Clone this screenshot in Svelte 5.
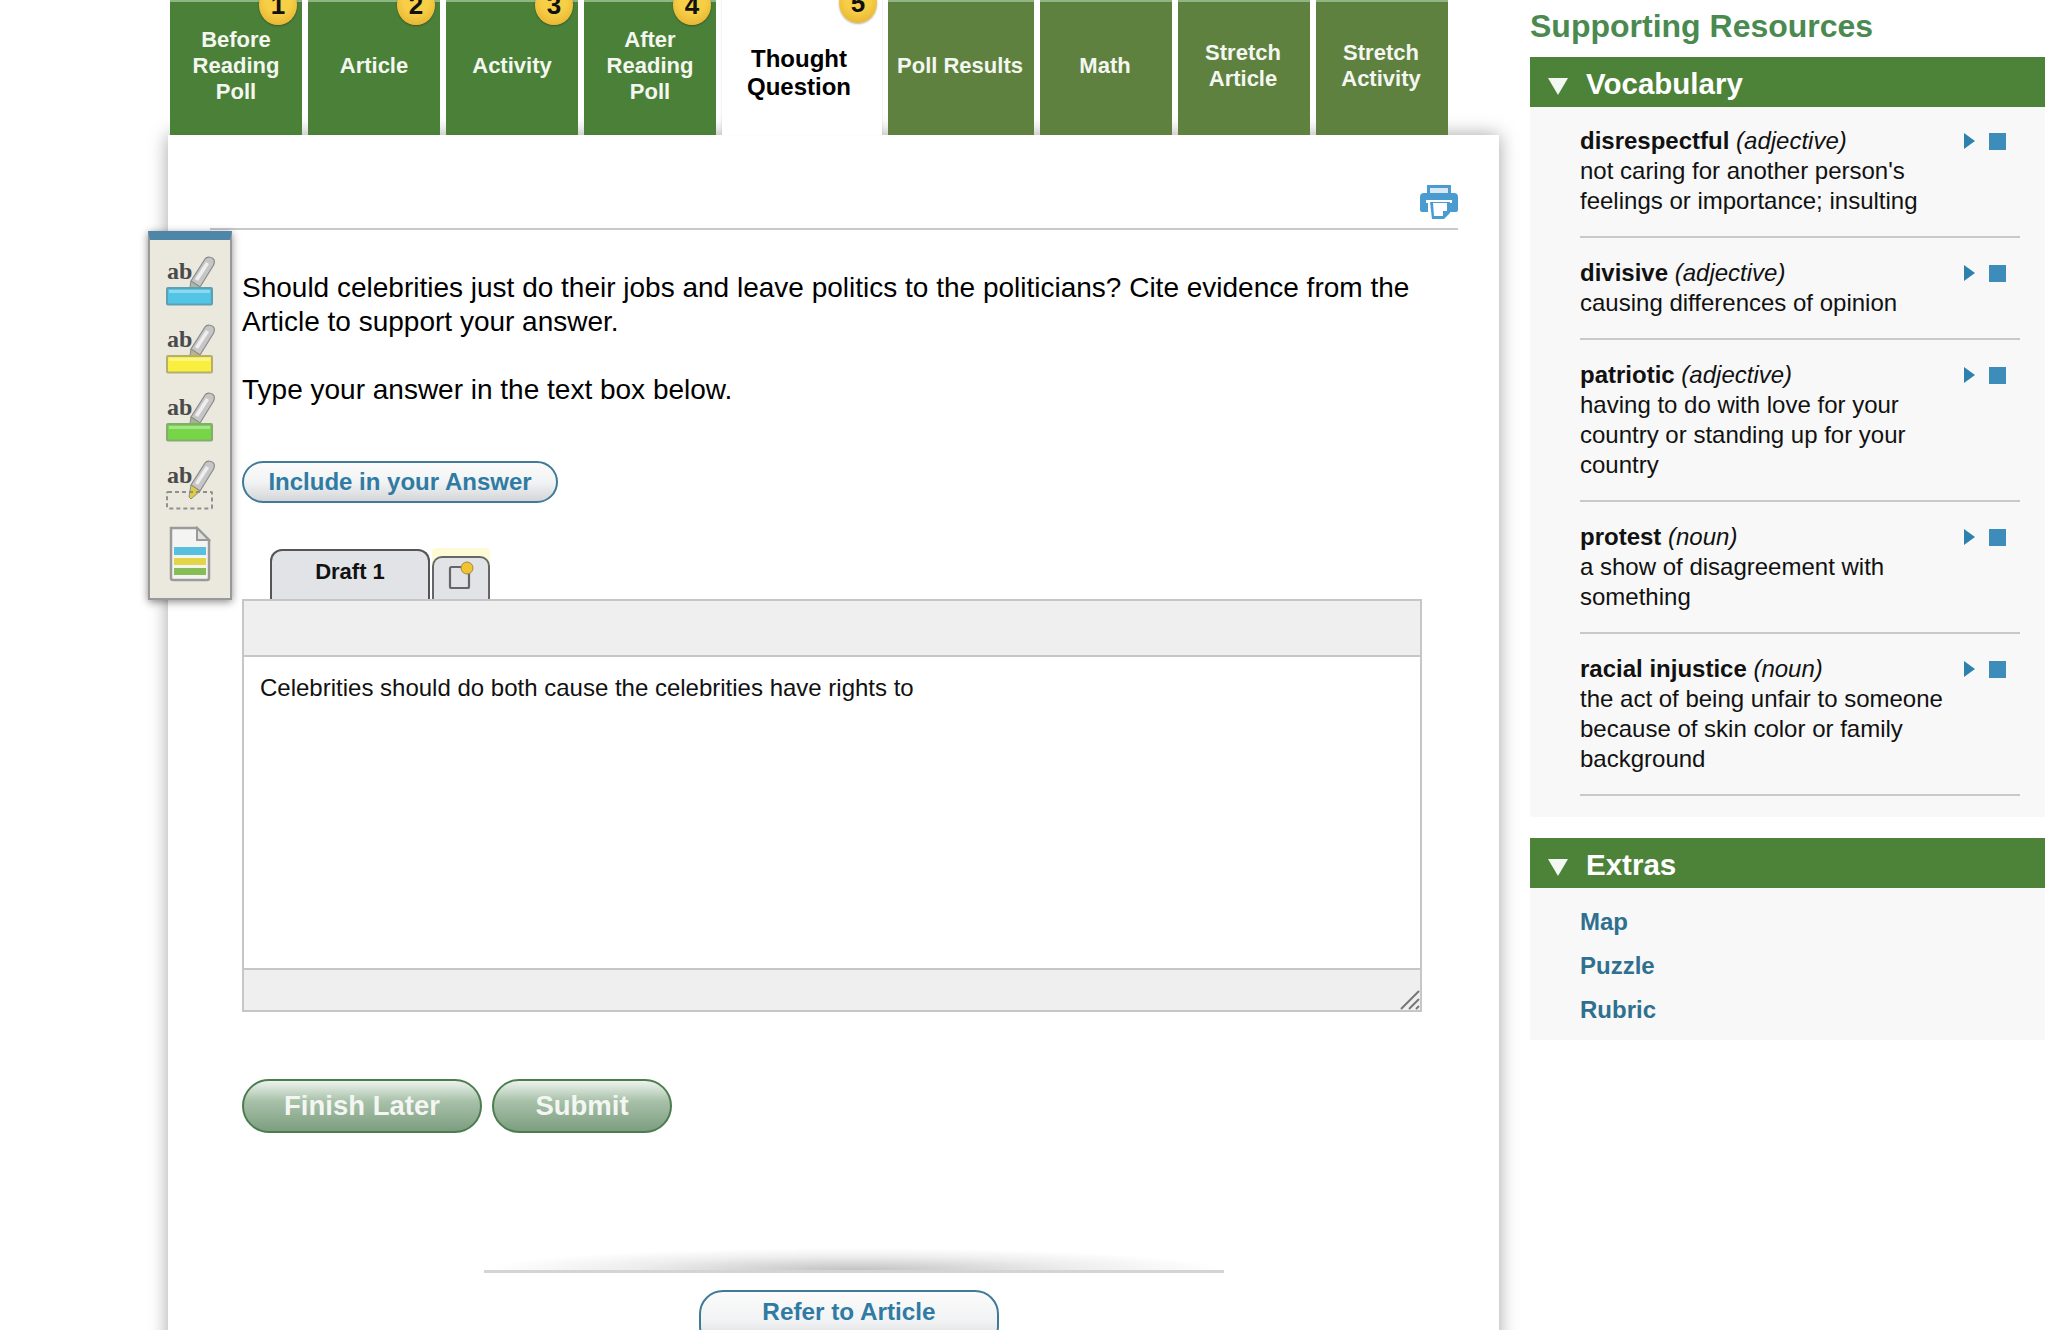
<script>
  const tabs = [
    { label: 'Before Reading Poll', badge: 1, w: 132 },
    { label: 'Article', badge: 2, w: 132 },
    { label: 'Activity', badge: 3, w: 132 },
    { label: 'After Reading Poll', badge: 4, w: 132 },
    { label: 'Thought Question', badge: 5, w: 160, active: true },
    { label: 'Poll Results', w: 146, later: true },
    { label: 'Math', w: 132, later: true },
    { label: 'Stretch Article', w: 132, later: true },
    { label: 'Stretch Activity', w: 132, later: true }
  ];
  const vocab = [
    { word: 'disrespectful', pos: 'adjective', def: "not caring for another person's feelings or importance; insulting" },
    { word: 'divisive', pos: 'adjective', def: 'causing differences of opinion' },
    { word: 'patriotic', pos: 'adjective', def: 'having to do with love for your country or standing up for your country' },
    { word: 'protest', pos: 'noun', def: 'a show of disagreement with something' },
    { word: 'racial injustice', pos: 'noun', def: 'the act of being unfair to someone because of skin color or family background' }
  ];
  const marks = [
    { fill: '#52c4e6', stroke: '#5f9fb2', tip: '#a9b8a8' },
    { fill: '#f8ef3e', stroke: '#b5ae74', tip: '#b9b48a' },
    { fill: '#76d648', stroke: '#84ab70', tip: '#a0b88a' },
    { fill: 'none', stroke: '#8f8f8f', tip: '#e0cc40', dashed: true }
  ];
</script>

<div class="page">
  <main class="main">
    <nav class="tabs">
      {#each tabs as t}
        <div class="tab" class:active={t.active} class:later={t.later} style="width:{t.w}px">
          <span class="tab-label">{t.label}</span>
          {#if t.badge}<span class="badge">{t.badge}</span>{/if}
        </div>
      {/each}
    </nav>

    <section class="panel">
      <div class="print-row">
        <svg class="printer" viewBox="0 0 38 34" width="38" height="34" aria-hidden="true">
          <path fill="#4a9bd0" d="M7 0h24v8h3a4 4 0 0 1 4 4v13a2 2 0 0 1-2 2h-6v-9H8v9H2a2 2 0 0 1-2-2V12a4 4 0 0 1 4-4h3z"/>
          <path fill="#d5e8f4" d="M10 3h18v5H10z"/>
          <path fill="#fff" d="M6 15h26v3H6z"/>
          <path fill="#4a9bd0" d="M10 17h20v11l-6 6H12z"/>
          <path fill="#fff" d="M13 18h14v8h-4v5h-9z"/>
        </svg>
      </div>

      <aside class="toolbar">
        {#each marks as m}
          <svg viewBox="0 0 50 52" width="50" height="52" aria-hidden="true">
            <text x="2" y="25" class="ab">ab</text>
            <g transform="translate(0 2)">
              <path fill="#c6c6c6" stroke="#8a8a8a" stroke-width="1.2" d="M26 25 40 3c2-3 8-2 9 1s0 4-1 6L35 31z"/>
              <path fill="#eee" d="M41 6l3 2-11 17-3-2z"/>
              <path fill={m.tip} stroke="#8a8a8a" d="M26 25l9 6-9 8-2-2z"/>
            </g>
            <rect x="2" y="34" width="45" height="16.5" rx="1" fill={m.fill} stroke={m.stroke} stroke-width="2" stroke-dasharray={m.dashed ? '4 3' : 'none'}/>
            {#if !m.dashed}<rect x="4" y="36" width="41" height="3" fill="#fff" opacity=".35"/>{/if}
          </svg>
        {/each}
        <svg viewBox="0 0 42 56" width="42" height="56" aria-hidden="true">
          <path fill="#f4f4f2" stroke="#9a9a9a" stroke-width="2.5" d="M2 2h26l12 12v38a2 2 0 0 1-2 2H4a2 2 0 0 1-2-2z"/>
          <path fill="#e0e0dc" stroke="#9a9a9a" stroke-width="2" d="M28 2v12h12z"/>
          <rect x="5" y="21" width="32" height="8" fill="#58bfdf"/>
          <rect x="5" y="32" width="32" height="7" fill="#e3d548"/>
          <rect x="5" y="42" width="32" height="7" fill="#86bd55"/>
        </svg>
      </aside>

      <div class="content">
        <p class="question">Should celebrities just do their jobs and leave politics to the politicians? Cite evidence from the Article to support your answer.</p>
        <p class="question hint">Type your answer in the text box below.</p>

        <button class="pill include">Include in your Answer</button>

        <div class="draft-tabs">
          <div class="draft">Draft 1</div>
          <div class="note-wrap">
            <div class="note">
              <svg viewBox="0 0 28 30" width="28" height="30" aria-hidden="true">
                <rect x="3" y="7" width="19" height="21" rx="1.5" fill="none" stroke="#666" stroke-width="2.2"/>
                <circle cx="20" cy="8" r="6" fill="#f2c230" stroke="#9a8a50" stroke-width="1"/>
              </svg>
            </div>
          </div>
        </div>

        <div class="editor">
          <div class="ed-top"></div>
          <div class="ed-body">Celebrities should do both cause the celebrities have rights to</div>
          <div class="ed-bottom">
            <svg class="grip" viewBox="0 0 22 22" width="22" height="22" aria-hidden="true">
              <path d="M21 3 3 21M21 11 11 21M21 18l-3 3" stroke="#777" stroke-width="2" fill="none"/>
            </svg>
          </div>
        </div>

        <div class="actions">
          <button class="green finish">Finish Later</button>
          <button class="green submit">Submit</button>
        </div>
      </div>

      <div class="foot">
        <div class="rule"></div>
        <button class="pill refer">Refer to Article</button>
      </div>
    </section>
  </main>

  <aside class="side">
    <h2>Supporting Resources</h2>
    <div class="head"><span class="tri"></span>Vocabulary</div>
    <div class="box vocab">
      {#each vocab as v}
        <div class="item">
          <div class="txt"><b>{v.word}</b> <i>({v.pos})</i><br />{v.def}</div>
          <div class="controls"><span class="play"></span><span class="stop"></span></div>
        </div>
      {/each}
    </div>
    <div class="head extras"><span class="tri"></span>Extras</div>
    <div class="box links">
      <span>Map</span>
      <span>Puzzle</span>
      <span>Rubric</span>
    </div>
  </aside>
</div>

<style>
  :global(body) { margin: 0; background: #fff; }
  .page {
    width: 2045px; height: 1330px; overflow: hidden; display: flex;
    font-family: "Liberation Sans", Arial, sans-serif; color: #000;
  }
  button { font-family: inherit; cursor: pointer; }
  .main { width: 1331px; margin-left: 168px; flex: none; display: flex; flex-direction: column; }
  .tabs { display: flex; gap: 6px; padding-left: 2px; height: 135px; position: relative; z-index: 2; }
  .tab {
    position: relative; flex: none; box-sizing: border-box; height: 135px; padding: 1px 4px 7px;
    display: flex; align-items: center; justify-content: center; text-align: center;
    background: #4b8039; border-top: 2px solid #8fb583;
    color: #f4f7f0; font-size: 22px; font-weight: 700; line-height: 26px;
  }
  .tab.later { background: #5f8140; padding: 1px 5px 7px 3px; }
  .tab.active {
    background: #fff; color: #000; font-size: 24px; line-height: 28px; border-top: 0;
    padding: 17px 19px 7px 13px; box-shadow: 0 -1px 2px rgba(0,0,0,.15);
  }
  .tab-label { display: block; max-width: 124px; }
  .tab.later .tab-label { max-width: 130px; }
  .badge {
    position: absolute; right: 5px; top: -17px; width: 38px; height: 40px; border-radius: 50%;
    background: radial-gradient(circle at 50% 40%, #f7cf47 40%, #e2a92a 100%);
    color: #111; font-size: 26px; line-height: 40px; font-weight: 700;
    box-shadow: 0 1px 2px rgba(0,0,0,.3);
  }
  .panel {
    position: relative; flex: 1; background: #fff; box-shadow: 0 0 18px rgba(0,0,0,.36);
    display: flex; flex-direction: column; padding-left: 74px; box-sizing: border-box;
  }
  .print-row {
    height: 95px; margin-right: 41px; margin-left: -32px; box-sizing: border-box;
    border-bottom: 2px solid #c9c9c9; display: flex; justify-content: flex-end; align-items: flex-start;
    padding: 50px 0 0 0;
  }
  .toolbar {
    position: absolute; left: -20px; top: 96px; width: 84px; height: 369px; box-sizing: border-box;
    background: #ebe8dd; border: 2px solid #999; border-top: 9px solid #4e86a8;
    box-shadow: 0 2px 8px rgba(0,0,0,.45);
    display: flex; flex-direction: column; align-items: center; padding-top: 14px; gap: 16px; z-index: 3;
  }
  .toolbar svg { display: block; flex: none; }
  .ab { font-family: "Liberation Serif", serif; font-weight: 700; font-size: 24px; fill: #4a4a4a; }
  .content { padding-top: 41px; width: 1180px; }
  .question { margin: 0; font-size: 28px; line-height: 34px; width: 1200px; }
  .hint { margin-top: 34px; }
  .pill {
    display: block; box-sizing: border-box; border: 2px solid #3f7a97; border-radius: 24px;
    background: linear-gradient(#fbfbfb, #f2f3f4 50%, #d4d6d9);
    color: #2f7ba3; font-weight: 700; padding: 0;
  }
  .include { width: 316px; height: 42px; margin-top: 54px; font-size: 24px; line-height: 36px; }
  .draft-tabs { display: flex; align-items: flex-end; gap: 2px; padding-left: 28px; margin-top: 45px; height: 51px; }
  .draft {
    box-sizing: border-box; width: 160px; height: 50px; background: #e2e3e7; border: 2px solid #555; border-bottom: 0;
    border-radius: 12px 12px 0 0; text-align: center; font-size: 22px; font-weight: 700; line-height: 41px; color: #111;
  }
  .note-wrap { background: #fdfbd6; padding-top: 8px; border-radius: 4px 4px 0 0; }
  .note {
    box-sizing: border-box; width: 58px; height: 43px; background: #e2e3e7; border: 2px solid #666; border-bottom: 0;
    border-radius: 10px 10px 0 0; display: flex; justify-content: center; padding-top: 2px;
  }
  .editor { box-sizing: border-box; width: 1180px; height: 413px; border: 2px solid #c6c6c6; display: flex; flex-direction: column; }
  .ed-top { height: 54px; background: #efefef; border-bottom: 2px solid #c6c6c6; flex: none; }
  .ed-body { flex: 1; padding: 15px 16px; font-size: 24px; line-height: 32px; color: #111; background: #fff; }
  .ed-bottom { height: 40px; background: #efefef; border-top: 2px solid #c6c6c6; flex: none; display: flex; justify-content: flex-end; align-items: flex-end; }
  .grip { display: block; }
  .actions { display: flex; gap: 10px; margin-top: 67px; }
  .green {
    box-sizing: border-box; height: 54px; border: 2px solid #4b7d4f; border-radius: 27px; padding: 0;
    background: linear-gradient(#edf3ee, #a8c1a9 40%, #7d9e80);
    color: #f3f6f2; font-size: 27.5px; font-weight: 700;
  }
  .finish { width: 240px; }
  .submit { width: 180px; }
  .foot { margin-top: 115px; margin-left: 242px; width: 740px; position: relative; }
  .rule {
    height: 22px; border-bottom: 3px solid #d4d4d4;
    background: radial-gradient(ellipse 50% 100% at 50% 100%, rgba(0,0,0,.24), rgba(0,0,0,.07) 60%, rgba(0,0,0,0) 100%);
  }
  .refer { width: 300px; height: 60px; margin: 17px 0 0 215px; font-size: 24.3px; line-height: 36px; padding-bottom: 17px; }

  .side { width: 515px; margin-left: 31px; flex: none; }
  h2 { margin: 0; height: 57px; padding-top: 6px; box-sizing: border-box; font-size: 32px; line-height: 40px; color: #4a8a50; font-weight: 700; }
  .head {
    display: flex; align-items: center; box-sizing: border-box; height: 50px; background: #4d8239; color: #fff;
    font-size: 29.5px; font-weight: 700; padding: 3px 0 0 56px; position: relative;
  }
  .tri {
    position: absolute; left: 18px; top: 21px; width: 0; height: 0;
    border-left: 10px solid transparent; border-right: 10px solid transparent; border-top: 17px solid #f4f8f2;
  }
  .box { background: #f8f8f8; }
  .vocab { padding: 19px 25px 21px 50px; }
  .item { display: flex; justify-content: space-between; border-bottom: 2px solid #c9c9c9; margin-bottom: 20px; padding-bottom: 20px; }
  .item:last-child { margin-bottom: 0; }
  .txt { width: 370px; font-size: 24px; line-height: 30px; color: #111; }
  .controls { display: flex; align-items: center; height: 30px; gap: 14px; padding-right: 14px; }
  .play { width: 0; height: 0; border-left: 11px solid #2d82ad; border-top: 8.5px solid transparent; border-bottom: 8.5px solid transparent; }
  .stop { width: 17px; height: 17px; background: #3d8cba; }
  .extras { margin-top: 21px; }
  .links { display: flex; flex-direction: column; padding: 19px 0 15px 50px; gap: 14px; font-size: 24px; line-height: 30px; font-weight: 700; color: #2f6f8f; }
</style>
